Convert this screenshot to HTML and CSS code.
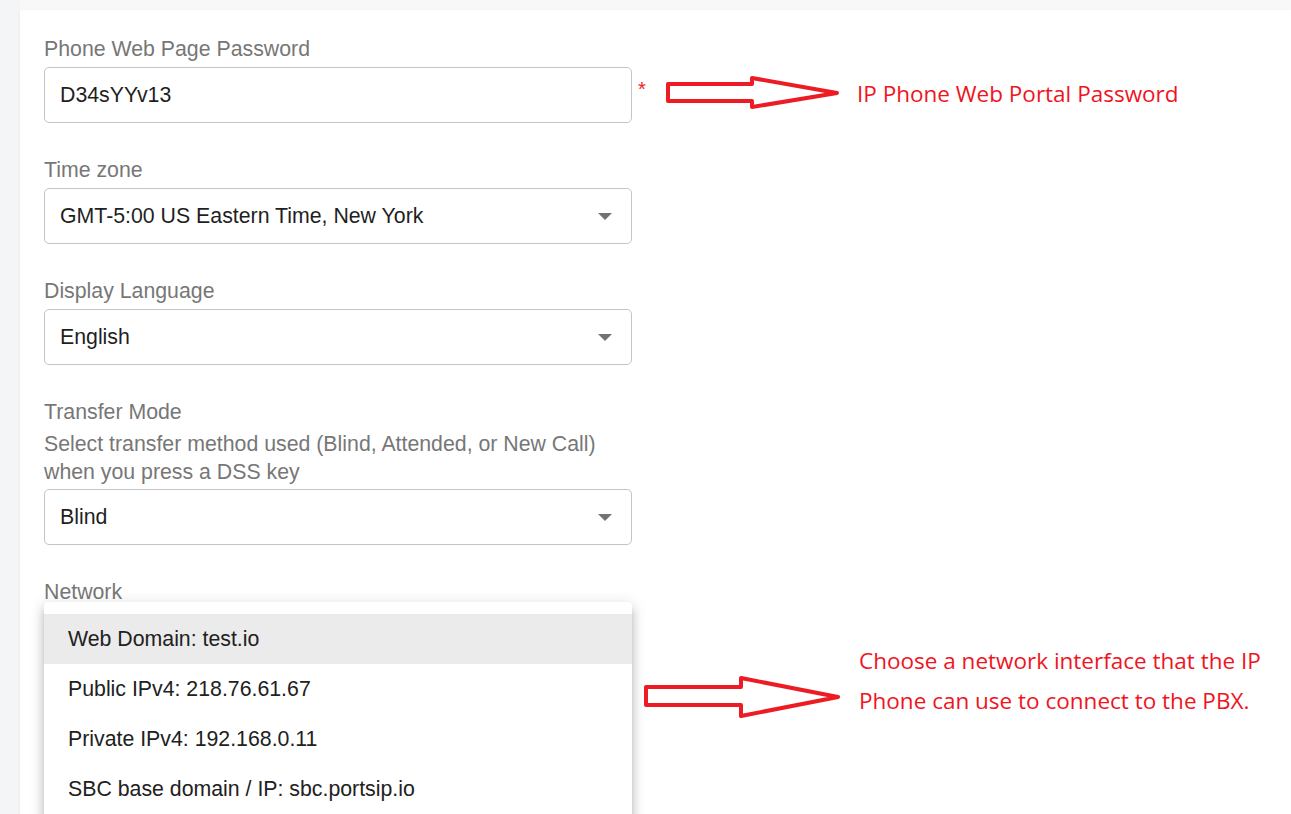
FILE: index.html
```html
<!DOCTYPE html>
<html lang="en">
<head>
<meta charset="utf-8">
<title>Phone settings</title>
<link rel="stylesheet" href="styles.css">
</head>
<body>
<div class="page">
  <aside class="side"></aside>
  <main class="main">
    <div class="topbar"></div>
    <section class="card">
      <div class="field">
        <div class="label">Phone Web Page Password</div>
        <div class="box"><span class="value">D34sYYv13</span></div>
      </div>
      <div class="field">
        <div class="label">Time zone</div>
        <div class="box select"><span class="value">GMT-5:00 US Eastern Time, New York</span><span class="caret"></span></div>
      </div>
      <div class="field">
        <div class="label">Display Language</div>
        <div class="box select"><span class="value">English</span><span class="caret"></span></div>
      </div>
      <div class="field">
        <div class="label">Transfer Mode</div>
        <div class="helper">Select transfer method used (Blind, Attended, or New Call)<br>when you press a DSS key</div>
        <div class="box select"><span class="value">Blind</span><span class="caret"></span></div>
      </div>
      <div class="field">
        <div class="label">Network</div>
        <div class="menu-anchor">
          <div class="box select"><span class="value">Web Domain: test.io</span><span class="caret"></span></div>
          <ul class="menu">
            <li class="item active">Web Domain: test.io</li>
            <li class="item">Public IPv4: 218.76.61.67</li>
            <li class="item">Private IPv4: 192.168.0.11</li>
            <li class="item">SBC base domain / IP: sbc.portsip.io</li>
          </ul>
        </div>
      </div>
    </section>
  </main>
  <div class="notes">
    <span class="star">*</span>
    <svg class="arrow" width="1291" height="814" viewBox="0 0 1291 814">
      <polygon points="668,84 752,84 752,78 837,93 752,107 752,101 668,101" />
      <polygon points="646,687 741,687 741,678 838,697 741,716 741,705 646,705" />
    </svg>
    <div class="note note1">IP Phone Web Portal Password</div>
    <div class="note note2">Choose a network interface that the IP<br>Phone can use to connect to the PBX.</div>
  </div>
</div>
</body>
</html>
```
FILE: styles.css
```css
html, body {
  margin: 0;
  padding: 0;
  height: 100%;
  overflow: hidden;
}
body {
  background: #f5f6f7;
  font-family: "Liberation Sans", Arial, sans-serif;
}
.page {
  position: relative;
  display: flex;
  width: 1291px;
  height: 814px;
  overflow: hidden;
}
.side {
  width: 20px;
  flex: none;
  background: #f4f5f7;
}
.main {
  flex: 1;
  display: flex;
  flex-direction: column;
  background: #f8f8f8;
}
.topbar {
  height: 10px;
  flex: none;
}
.card {
  flex: 1;
  background: #ffffff;
  padding: 25px 24px 0;
  box-shadow: -1px 0 2px rgba(0,0,0,0.04);
}
.field {
  width: 588px;
  margin-bottom: 33px;
}
.label, .helper {
  font-size: 21.3px;
  line-height: 28px;
  color: #777777;
}
.label {
  margin-bottom: 4px;
}
.helper {
  margin-top: 0;
  margin-bottom: 3px;
}
.box {
  height: 54px;
  border: 1px solid #c4c4c4;
  border-radius: 5px;
  display: flex;
  align-items: center;
  padding: 0 19px 0 15px;
}
.value {
  flex: 1;
  font-size: 21.3px;
  color: #1f1f1f;
}
.caret {
  width: 0;
  height: 0;
  border-left: 7px solid transparent;
  border-right: 7px solid transparent;
  border-top: 7px solid #737373;
}
.menu-anchor {
  position: relative;
}
.menu {
  position: absolute;
  top: -8px;
  left: 0;
  width: 588px;
  margin: 0;
  padding: 12px 0 8px;
  list-style: none;
  background: #ffffff;
  border-radius: 4px;
  box-shadow: 0 5px 5px -3px rgba(0,0,0,0.2), 0 8px 10px 1px rgba(0,0,0,0.14), 0 3px 14px 2px rgba(0,0,0,0.12);
}
.item {
  height: 50px;
  line-height: 50px;
  padding: 0 24px;
  font-size: 21.3px;
  color: #212121;
}
.item.active {
  background: #ebebeb;
}
.notes {
  position: absolute;
  inset: 0;
  pointer-events: none;
}
.arrow {
  position: absolute;
  left: 0;
  top: 0;
}
.arrow polygon {
  fill: none;
  stroke: #ed1c24;
  stroke-width: 4;
  stroke-linejoin: round;
}
.star {
  position: absolute;
  left: 638px;
  top: 79px;
  font-family: "Liberation Sans", Arial, sans-serif;
  font-size: 20px;
  line-height: 20px;
  color: #ed1c24;
}
.note {
  position: absolute;
  font-family: "Open Sans", "Noto Sans", sans-serif;
  color: #f0141e;
  font-size: 22.5px;
  white-space: nowrap;
}
.note1 {
  left: 857px;
  top: 74px;
  line-height: 40px;
}
.note2 {
  left: 859px;
  top: 641px;
  line-height: 40px;
}
```
